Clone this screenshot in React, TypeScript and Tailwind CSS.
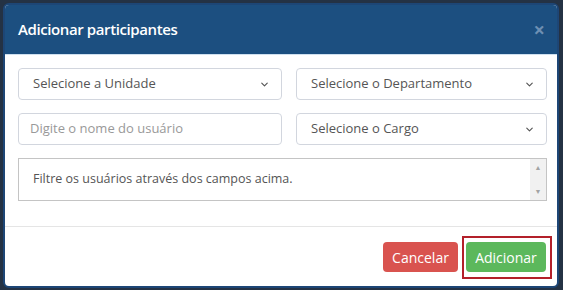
import { ChevronDown } from "lucide-react";

function FakeSelect({ label }: { label: string }) {
  return (
    <div className="flex h-[32px] items-center justify-between rounded-[4px] border border-[#d2d6de] bg-white pl-[14px] pr-[11px] text-[13px] text-[#555]">
      <span>{label}</span>
      <ChevronDown size={11} strokeWidth={2.5} className="text-[#555]" />
    </div>
  );
}

export default function App() {
  return (
    <div className="h-[290px] w-[563px] bg-[#243244] pl-[3px] pt-[3px] font-['Open_Sans',sans-serif]">
      <div className="w-[556px] h-[285px] overflow-hidden rounded-[6px] border-2 border-[#1d4676] bg-white">

        {/* header */}
        <div className="flex h-[50px] items-center justify-between border-b border-[#cfe0ef] bg-[#1c4f80] pl-[13px] pr-[12px]">
          <h1 className="text-[15px] font-semibold tracking-[-0.4px] text-white">Adicionar participantes</h1>
          <span className="text-[20px] font-bold leading-none text-[#6e8fb3]">×</span>
        </div>

        {/* body */}
        <div className="border-b border-[#e5e5e5] pl-[13px] pr-[7px] pt-[13px] pb-[25px]">
          <div className="grid grid-cols-[264px_251px] gap-x-[14px] gap-y-[13px]">
            <FakeSelect label="Selecione a Unidade" />
            <FakeSelect label="Selecione o Departamento" />
            <div className="flex h-[32px] items-center rounded-[4px] border border-[#d2d6de] pl-[11px] text-[13px] text-[#999]">
              Digite o nome do usuário
            </div>
            <FakeSelect label="Selecione o Cargo" />
          </div>

          <div className="mt-[13px] flex h-[43px] w-[529px] border border-[#c4c4c4] bg-white">
            <div className="flex flex-1 items-center pl-[14px] text-[12.5px] text-[#555]">
              Filtre os usuários através dos campos acima.
            </div>
            <div className="flex w-[16px] flex-col items-center justify-between bg-[#f1f1f1] py-[5px] text-[7px] leading-none text-[#a3a3a3]">
              <span>▲</span>
              <span>▼</span>
            </div>
          </div>
        </div>

        {/* footer */}
        <div className="flex justify-end gap-[8px] pr-[11px] pt-[15px]">
          <button className="h-[30px] w-[75px] rounded-[4px] bg-[#d9534f] text-[14px] text-white">
            Cancelar
          </button>
          <div className="relative">
            <button className="h-[30px] w-[80px] rounded-[4px] bg-[#5cb85c] text-[14px] text-white">
              Adicionar
            </button>
            <div className="absolute -left-[4px] -right-[6px] -top-[6px] -bottom-[7px] border-2 border-[#b3202a]" />
          </div>
        </div>

      </div>
    </div>
  );
}
